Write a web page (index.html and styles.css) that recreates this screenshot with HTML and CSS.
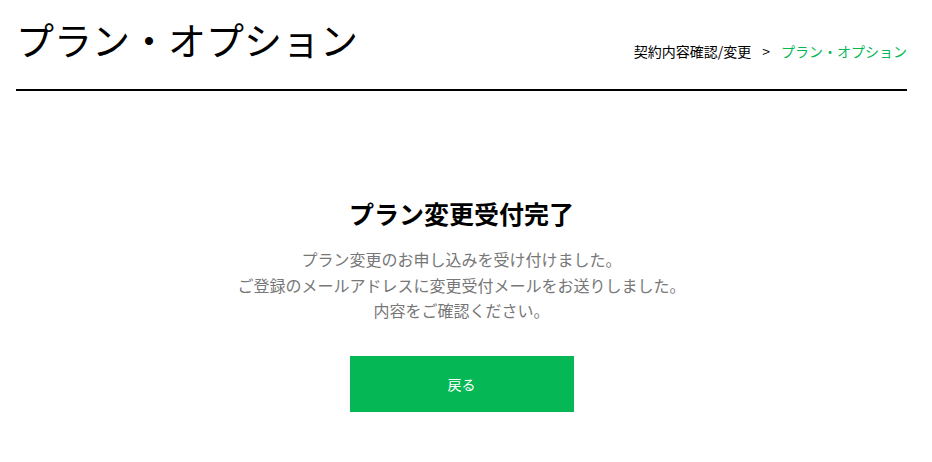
FILE: index.html
```html
<!DOCTYPE html>
<html lang="ja">
<head>
<meta charset="utf-8">
<link rel="stylesheet" href="styles.css">
</head>
<body>
<div class="page">
  <header class="head">
    <h1 class="title">プラン・オプション</h1>
    <nav class="crumbs"><span class="crumb">契約内容確認/変更</span><span class="sep">&gt;</span><span class="crumb current">プラン・オプション</span></nav>
  </header>
  <main class="done">
    <h2 class="done-title">プラン変更受付完了</h2>
    <p class="done-text">プラン変更のお申し込みを受け付けました。<br>ご登録のメールアドレスに変更受付メールをお送りしました。<br>内容をご確認ください。</p>
    <a class="btn" href="#">戻る</a>
  </main>
</div>
</body>
</html>
```
FILE: styles.css
```css
html, body {
  margin: 0;
  padding: 0;
  background: #fff;
}
body {
  font-family: "Noto Sans CJK JP", "Noto Sans", sans-serif;
  color: #000;
}
.page {
  padding: 0 25px 0 16px;
}
.head {
  display: flex;
  justify-content: space-between;
  align-items: flex-end;
  border-bottom: 2px solid #000;
  padding: 14px 0 25px;
}
.title {
  margin: 0;
  font-size: 38px;
  font-weight: 400;
  line-height: 50px;
  letter-spacing: 0;
}
.crumbs {
  display: flex;
  gap: 11px;
  font-size: 14px;
  line-height: 20px;
  margin-bottom: 3px;
}
.crumb.current {
  color: #06b755;
}
.done {
  display: flex;
  flex-direction: column;
  align-items: center;
  padding-top: 105px;
}
.done-title {
  margin: 0;
  font-size: 25px;
  font-weight: 700;
  line-height: 34px;
}
.done-text {
  margin: 17px 0 0;
  font-size: 16px;
  line-height: 25.5px;
  color: #777;
  text-align: center;
}
.btn {
  margin-top: 32px;
  display: flex;
  align-items: center;
  justify-content: center;
  width: 224px;
  height: 56px;
  background: #06b855;
  color: #fff;
  font-size: 14px;
  text-decoration: none;
}
```
